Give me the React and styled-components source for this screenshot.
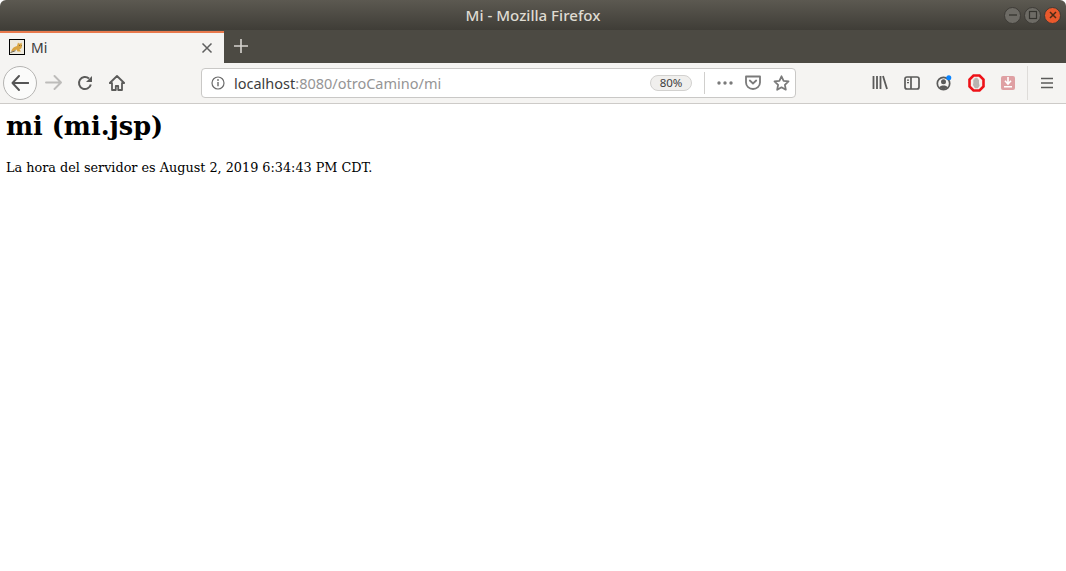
import React from "react";
import styled, { createGlobalStyle } from "styled-components";

const Global = createGlobalStyle`
  html, body {
    margin: 0;
    padding: 0;
    height: 100%;
    background: #ffffff;
    overflow: hidden;
  }
`;

const App = () => {
  return (
    <Wrapper>
      <Global />
      <TitleBar>
        <span />
        <WindowTitle>Mi - Mozilla Firefox</WindowTitle>
        <WindowButtons>
          <WindowButton>
            <svg width="10" height="10" viewBox="0 0 10 10"><path d="M1 5h8" stroke="#35342f" strokeWidth="1.3" /></svg>
          </WindowButton>
          <WindowButton>
            <svg width="10" height="10" viewBox="0 0 10 10"><rect x="1.5" y="1.5" width="7" height="7" fill="none" stroke="#35342f" strokeWidth="1.2" /></svg>
          </WindowButton>
          <WindowButton $close>
            <svg width="10" height="10" viewBox="0 0 10 10"><path d="M2 2l6 6M8 2l-6 6" stroke="#4a2a16" strokeWidth="1.5" /></svg>
          </WindowButton>
        </WindowButtons>
      </TitleBar>

      <TabStrip>
        <Tab>
          <Favicon>
            <svg width="14" height="14" viewBox="0 0 14 14">
              <rect width="14" height="14" fill="#eeeadf" />
              <path d="M1 11.500c1-3 3-5 6-5.500l1-3.500 1 1h1.500l1-1 .5 3.500c0 2-1 3-2.500 3.200l1.500 2.300H7.500L6.500 9.500 3.500 11z" fill="#d9a441" />
              <path d="M.5 12.500l5-1.800M9 5.500h.8M11 5.500h.6" stroke="#5e5138" strokeWidth=".9" fill="none" />
            </svg>
          </Favicon>
          <TabLabel>Mi</TabLabel>
          <TabClose>
            <svg width="12" height="12" viewBox="0 0 12 12"><path d="M1.500 1.500l9 9M10.500 1.500l-9 9" stroke="#5f5f5f" strokeWidth="1.500" /></svg>
          </TabClose>
        </Tab>
        <NewTab>
          <svg width="14" height="14" viewBox="0 0 14 14"><path d="M7 0v14M0 7h14" stroke="#d6d4cf" strokeWidth="1.600" /></svg>
        </NewTab>
      </TabStrip>

      <NavBar>
        <BackButton>
          <svg width="18" height="16" viewBox="0 0 18 16"><path d="M8 1L1.500 8 8 15M2 8h15.500" fill="none" stroke="#555" strokeWidth="1.900" strokeLinecap="round" strokeLinejoin="round" /></svg>
        </BackButton>
        <ToolButton>
          <svg width="17" height="15" viewBox="0 0 17 15"><path d="M9.500 1L16 7.500 9.500 14M15.500 7.500H1" fill="none" stroke="#bdbcba" strokeWidth="1.900" strokeLinecap="round" strokeLinejoin="round" /></svg>
        </ToolButton>
        <ToolButton>
          <svg width="16" height="16" viewBox="0 0 16 16"><path d="M13.800 9.500A6 6 0 1 1 12 3.600" fill="none" stroke="#5b5b5a" strokeWidth="2" /><path d="M15 1v6H9z" fill="#5b5b5a" /></svg>
        </ToolButton>
        <ToolButton>
          <svg width="16" height="16" viewBox="0 0 16 16"><path d="M8 1L.8 8h2.200v7h3.800v-4h2.400v4H13V8h2.200z" fill="none" stroke="#5b5b5a" strokeWidth="1.800" strokeLinejoin="round" /></svg>
        </ToolButton>

        <UrlBar>
          <InfoIcon>
            <svg width="14" height="14" viewBox="0 0 14 14"><circle cx="7" cy="7" r="6" fill="none" stroke="#6b6b6b" strokeWidth="1.200" /><path d="M7 6v4.200" stroke="#6b6b6b" strokeWidth="1.400" /><circle cx="7" cy="4" r=".9" fill="#6b6b6b" /></svg>
          </InfoIcon>
          <Url>
            localhost<UrlRest>:8080/otroCamino/mi</UrlRest>
          </Url>
          <ZoomPill>80%</ZoomPill>
          <UrlDivider />
          <UrlAction>
            <svg width="16" height="4" viewBox="0 0 16 4"><circle cx="2" cy="2" r="1.700" fill="#7a7a7a" /><circle cx="8" cy="2" r="1.700" fill="#7a7a7a" /><circle cx="14" cy="2" r="1.700" fill="#7a7a7a" /></svg>
          </UrlAction>
          <UrlAction>
            <svg width="16" height="15" viewBox="0 0 16 15"><path d="M1 1.500h14v6a7 6.500 0 0 1-14 0z" fill="none" stroke="#7a7a7a" strokeWidth="1.800" strokeLinejoin="round" /><path d="M4.800 5.500L8 8.500l3.200-3" fill="none" stroke="#7a7a7a" strokeWidth="1.800" strokeLinecap="round" /></svg>
          </UrlAction>
          <UrlAction>
            <svg width="17" height="16" viewBox="0 0 17 16"><path d="M8.500 1.300l2.100 4.500 4.900.6-3.600 3.400.9 4.900-4.300-2.400-4.300 2.400.9-4.900L1.500 6.400l4.900-.6z" fill="none" stroke="#7a7a7a" strokeWidth="1.800" strokeLinejoin="round" /></svg>
          </UrlAction>
        </UrlBar>

        <ToolGroup>
          <ToolButton>
            <svg width="16" height="15" viewBox="0 0 16 15"><path d="M1.500 1v13M5 1v13M8.500 1v13M11 1l4 13" fill="none" stroke="#5b5b5a" strokeWidth="1.800" /></svg>
          </ToolButton>
          <ToolButton>
            <svg width="16" height="14" viewBox="0 0 16 14"><rect x="1" y="1" width="14" height="12" rx="2" fill="none" stroke="#5b5b5a" strokeWidth="1.700" /><path d="M7 1v12" stroke="#5b5b5a" strokeWidth="1.700" /><path d="M3 4.200h2M3 6.700h2" stroke="#5b5b5a" strokeWidth="1.200" /></svg>
          </ToolButton>
          <ToolButton>
            <svg width="16" height="16" viewBox="0 0 16 16">
              <circle cx="7.500" cy="8.500" r="6.200" fill="none" stroke="#5b5b5a" strokeWidth="1.700" />
              <circle cx="7.500" cy="6.800" r="2.500" fill="#5b5b5a" />
              <path d="M3.400 12.200c1-2.400 7.200-2.400 8.200 0a5 5 0 0 1-8.200 0z" fill="#5b5b5a" />
              <circle cx="12.800" cy="2.800" r="2.500" fill="#0a84ff" />
            </svg>
          </ToolButton>
          <ToolButton>
            <svg width="17" height="18" viewBox="0 0 17 18">
              <path d="M5.500 1.500h6l4 4v7l-4 4h-6l-4-4v-7z" fill="#f5efec" stroke="#ee1218" strokeWidth="2.600" />
              <path d="M5.300 9V5.500h1.100V4.300h1.100V3.800h1.300v.5h1.100v1.200h1.100V9l.6 2.800-1.700 2.400H6.900L4.900 11z" fill="#b9b3b0" />
            </svg>
          </ToolButton>
          <ToolButton>
            <DownloadBox>
              <svg width="10" height="11" viewBox="0 0 10 11"><path d="M5 0v5.500M2 3.800L5 7l3-3.200M1 9.800h8" fill="none" stroke="#fff" strokeWidth="1.600" /></svg>
            </DownloadBox>
          </ToolButton>
        </ToolGroup>
        <ToolDivider />
        <ToolButton>
          <svg width="14" height="12" viewBox="0 0 14 12"><path d="M1 1.500h12M1 6h12M1 10.500h12" stroke="#5b5b5a" strokeWidth="1.700" /></svg>
        </ToolButton>
      </NavBar>

      <Page>
        <Heading>mi (mi.jsp)</Heading>
        <Paragraph>La hora del servidor es August 2, 2019 6:34:43 PM CDT.</Paragraph>
      </Page>
    </Wrapper>
  );
};

// Styles
const Wrapper = styled.div`
  width: 1066px;
  height: 571px;
  display: flex;
  flex-direction: column;
  background: #ffffff;
`;

const TitleBar = styled.div`
  height: 30px;
  flex: none;
  display: grid;
  grid-template-columns: 1fr auto 1fr;
  align-items: center;
  padding: 0 5px;
  border-radius: 6px 6px 0 0;
  background: linear-gradient(#5c5951, #3f3d37);
`;

const WindowTitle = styled.div`
  font-family: "Noto Sans", sans-serif;
  font-size: 15.100px;
  font-weight: 500;
  color: #dfdbd2;
  margin-top: -1px;
`;

const WindowButtons = styled.div`
  justify-self: end;
  display: flex;
  gap: 3px;
`;

const WindowButton = styled.div`
  width: 17px;
  height: 17px;
  box-sizing: border-box;
  border-radius: 50%;
  display: flex;
  align-items: center;
  justify-content: center;
  background: ${(p) => (p.$close ? "#e9592c" : "#6d6b65")};
  border: 0.500px solid #3d3b36;
`;

const TabStrip = styled.div`
  height: 33px;
  flex: none;
  display: flex;
  background: #4c4a43;
`;

const Tab = styled.div`
  width: 224px;
  box-sizing: border-box;
  display: flex;
  align-items: center;
  padding: 0 11px 2px 9px;
  background: #f5f4f2;
  border-top: 2px solid #e8794c;
  margin-top: 1px;
`;

const Favicon = styled.div`
  width: 16px;
  height: 16px;
  flex: none;
  box-sizing: border-box;
  display: flex;
  border: 1px solid #000000;
  svg {
    width: 14px;
    height: 14px;
  }
`;

const TabLabel = styled.div`
  margin-left: 6px;
  flex: 1;
  font-family: "Noto Sans", sans-serif;
  font-size: 14px;
  color: #3a3a3a;
`;

const TabClose = styled.div`
  display: flex;
  margin-top: 1px;
`;

const NewTab = styled.div`
  width: 33px;
  padding-bottom: 2px;
  display: flex;
  align-items: center;
  justify-content: center;
`;

const NavBar = styled.div`
  height: 41px;
  flex: none;
  box-sizing: border-box;
  display: flex;
  align-items: center;
  padding: 0 3px 1px;
  background: #f5f4f2;
  border-bottom: 1px solid #cdcbc8;
`;

const ToolButton = styled.div`
  width: 32px;
  height: 32px;
  flex: none;
  display: flex;
  align-items: center;
  justify-content: center;
`;

const BackButton = styled.div`
  width: 34px;
  height: 34px;
  flex: none;
  border-radius: 50%;
  border: 1px solid #b5b4b2;
  background: #fbfbfa;
  box-sizing: border-box;
  display: flex;
  align-items: center;
  justify-content: center;
`;

const UrlBar = styled.div`
  width: 595px;
  height: 30px;
  flex: none;
  box-sizing: border-box;
  margin-left: 68px;
  padding: 0 0 0 9px;
  display: flex;
  align-items: center;
  background: #ffffff;
  border: 1px solid #c9c8c6;
  border-radius: 4px;
`;

const InfoIcon = styled.div`
  width: 14px;
  display: flex;
`;

const Url = styled.div`
  flex: 1;
  margin-left: 9px;
  font-family: "Noto Sans", sans-serif;
  font-size: 14.500px;
  color: #3d3d3d;
`;

const UrlRest = styled.span`
  color: #959595;
`;

const ZoomPill = styled.div`
  width: 42px;
  height: 16px;
  box-sizing: border-box;
  display: flex;
  align-items: center;
  justify-content: center;
  border: 1px solid #d2d1cf;
  border-radius: 8px;
  background: #f0efed;
  font-family: "Noto Sans", sans-serif;
  font-size: 11.500px;
  color: #3d3d3d;
`;

const UrlDivider = styled.div`
  width: 1px;
  height: 22px;
  margin: 0 6px 0 12px;
  background: #d0cfcd;
`;

const UrlAction = styled.div`
  width: 28px;
  display: flex;
  justify-content: center;
`;

const ToolGroup = styled.div`
  margin-left: 68px;
  display: flex;
`;

const ToolDivider = styled.div`
  width: 1px;
  height: 34px;
  margin: 0 3px;
  background: #dedcd9;
`;

const DownloadBox = styled.div`
  width: 14px;
  height: 14px;
  border-radius: 2px;
  display: flex;
  align-items: center;
  justify-content: center;
  background: #dfa0a3;
`;

const Page = styled.div`
  padding: 7px 6px;
  font-family: "DejaVu Serif", serif;
  color: #000000;
`;

const Heading = styled.h1`
  margin: 0 0 19px;
  font-size: 25.600px;
  line-height: 30px;
  font-weight: 700;
`;

const Paragraph = styled.p`
  margin: 0;
  font-size: 12.800px;
  line-height: 15px;
`;

export default App;
